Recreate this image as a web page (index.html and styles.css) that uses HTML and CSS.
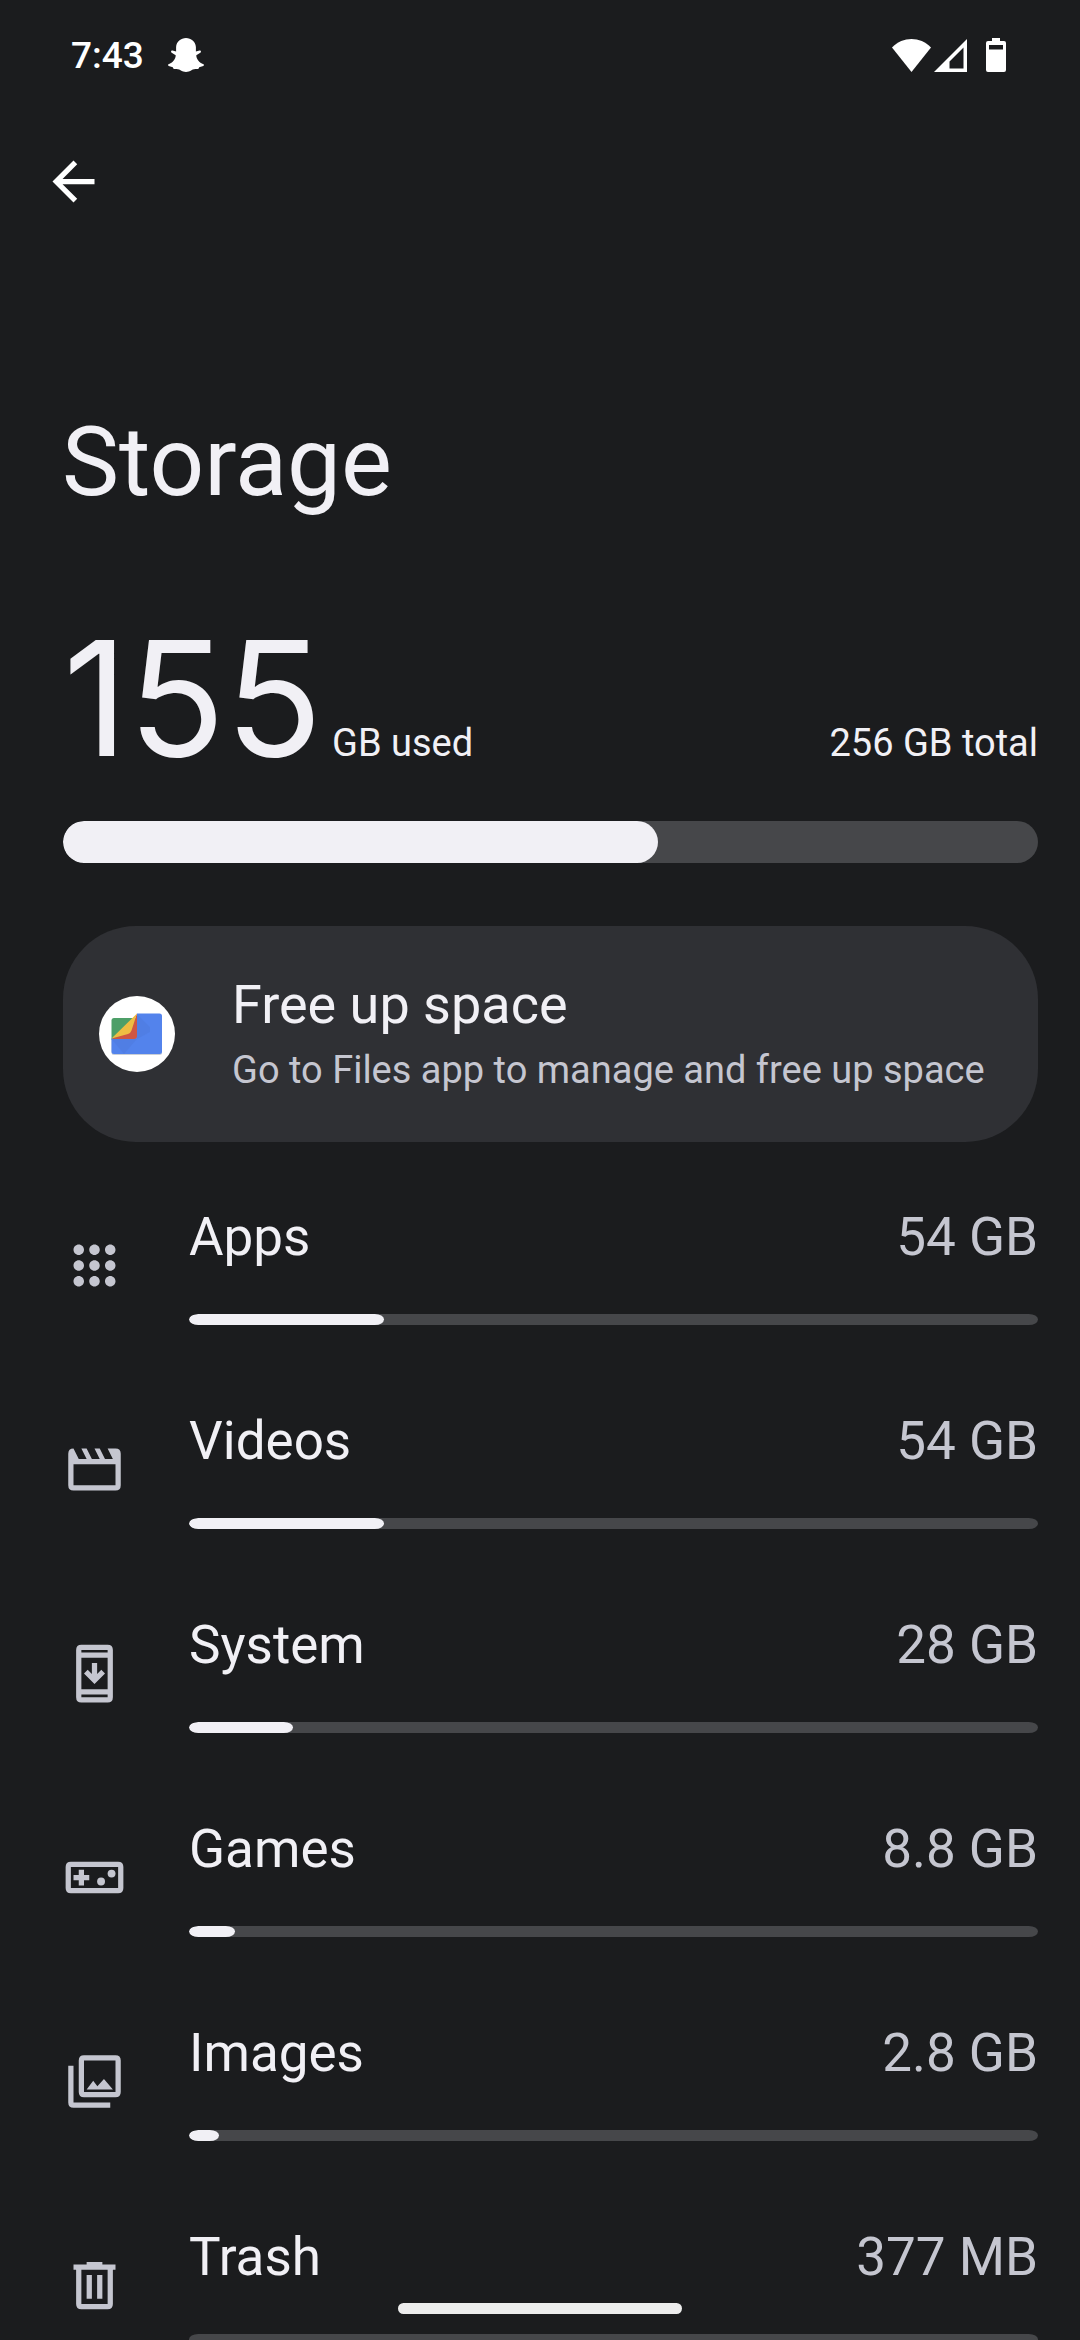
FILE: index.html
```html
<!DOCTYPE html>
<html lang="en">
<head>
  <meta charset="UTF-8" />
  <meta name="viewport" content="width=device-width, initial-scale=1.0"/>
  <title>Storage</title>
  <link rel="stylesheet" href="styles.css">
</head>
<body>

  <div class="status-bar">
    <div class="status-left">
      <span class="clock">7:43</span>
      <svg class="icon-snap" viewBox="0 0 36 34" aria-hidden="true">
        <path d="M18 0C23 0 27.600 3.500 27.900 9V13.600L31.500 12.600C33 12.500 33.500 14 32.300 14.800L28.300 17.200C28.300 21 31.200 24.600 35.500 26.300C36.200 26.800 36 27.600 35.300 28L31.200 29.300L30.300 31C27.500 30.900 25.600 31 23.500 32.200C20 34.500 16 34.500 12.500 32.200C10.400 31 8.500 30.900 5.700 31L4.800 29.300L.7 28C0 27.600-.2 26.800.5 26.300C4.800 24.600 7.700 21 7.700 17.200L3.700 14.800C2.500 14 3 12.500 4.500 12.600L8.100 13.600V9C8.400 3.500 13 0 18 0Z"/>
      </svg>
    </div>
    <div class="status-right">
      <svg class="icon-wifi" viewBox="0 0 39 33" aria-hidden="true">
        <path d="M0 8.500C11-2.800 28-2.800 39 8.500L19.500 33Z"/>
      </svg>
      <svg class="icon-signal" viewBox="0 0 33 33" aria-hidden="true">
        <path fill-rule="evenodd" d="M0 33L33 0V33ZM15.500 22.500V29.500H29.500V8.500Z"/>
      </svg>
      <svg class="icon-battery" viewBox="0 0 20 34" aria-hidden="true">
        <path fill-rule="evenodd" d="M6 0H14V3H18A2 2 0 0 1 20 5V32A2 2 0 0 1 18 34H2A2 2 0 0 1 0 32V5A2 2 0 0 1 2 3H6ZM3 7V11.500H17V7Z"/>
      </svg>
    </div>
  </div>

  <header class="app-bar">
    <button class="back-btn" type="button" aria-label="Back">
      <svg viewBox="0 0 24 24"><path d="M20 11H7.830l5.590-5.590L12 4l-8 8 8 8 1.410-1.410L7.830 13H20v-2z"/></svg>
    </button>
    <h1>Storage</h1>
  </header>

  <main>
    <section class="usage">
      <div class="usage-text">
        <p><span class="used-number">155</span> <span class="used-unit">GB used</span></p>
        <p class="total">256 GB total</p>
      </div>
      <progress class="bar bar-main" max="100" value="61" aria-label="Storage used"></progress>
    </section>

    <a class="card" href="#files">
      <svg class="files-icon" viewBox="0 0 76 76" aria-hidden="true">
        <circle cx="38" cy="38" r="38" fill="#fff"/>
        <path d="M15 22H38V44H12.500V24.500A2.500 2.500 0 0 1 15 22Z" fill="#4d9f68"/>
        <path d="M12.500 43H63V56.500A2.500 2.500 0 0 1 60.500 59H15A2.500 2.500 0 0 1 12.500 56.500Z" fill="#c9ced6"/>
        <path d="M12.500 55.500V42.500L36 42L38 17.500H60.500A2.500 2.500 0 0 1 63 20V55.500A2.500 2.500 0 0 1 60.500 58H15A2.500 2.500 0 0 1 12.500 55.500Z" fill="#5383ec"/>
        <path d="M38 18L51 31V36L38 43ZM12.500 43H38L25 58Z" fill="#4a76d6" opacity=".35"/>
        <path d="M38 17.500V40A3 3 0 0 1 35 43H12.500L31 36Z" fill="#ce5643"/>
        <path d="M38 17.500L32.500 34.500Q31.700 37 29 38L12.500 42.500Z" fill="#eebd42"/>
      </svg>
      <div class="card-text">
        <h2>Free up space</h2>
        <p>Go to Files app to manage and free up space</p>
      </div>
    </a>

    <ul class="categories">
      <li>
        <svg viewBox="0 0 24 24" aria-hidden="true"><path d="M6 8c1.100 0 2-.9 2-2s-.9-2-2-2-2 .9-2 2 .9 2 2 2zm6 0c1.100 0 2-.9 2-2s-.9-2-2-2-2 .9-2 2 .9 2 2 2zm6 0c1.100 0 2-.9 2-2s-.9-2-2-2-2 .9-2 2 .9 2 2 2zM6 14c1.100 0 2-.9 2-2s-.9-2-2-2-2 .9-2 2 .9 2 2 2zm6 0c1.100 0 2-.9 2-2s-.9-2-2-2-2 .9-2 2 .9 2 2 2zm6 0c1.100 0 2-.9 2-2s-.9-2-2-2-2 .9-2 2 .9 2 2 2zM6 20c1.100 0 2-.9 2-2s-.9-2-2-2-2 .9-2 2 .9 2 2 2zm6 0c1.100 0 2-.9 2-2s-.9-2-2-2-2 .9-2 2 .9 2 2 2zm6 0c1.100 0 2-.9 2-2s-.9-2-2-2-2 .9-2 2 .9 2 2 2z"/></svg>
        <div class="category">
          <p class="category-text"><span id="apps">Apps</span> <span class="size">54 GB</span></p>
          <progress class="bar" max="100" value="23" aria-labelledby="apps"></progress>
        </div>
      </li>
      <li>
        <svg viewBox="0 0 24 24" aria-hidden="true"><path fill-rule="evenodd" d="M4 4L6 8H9L7 4H9L11 8H14L12 4H14L16 8H19L17 4H20Q22 4 22 6V18Q22 20 20 20H4Q2 20 2 18V6Q2 4 4 4ZM4 10V18H20V10Z"/></svg>
        <div class="category">
          <p class="category-text"><span id="videos">Videos</span> <span class="size">54 GB</span></p>
          <progress class="bar" max="100" value="23" aria-labelledby="videos"></progress>
        </div>
      </li>
      <li>
        <svg viewBox="0 0 24 24" aria-hidden="true"><path fill-rule="evenodd" d="M7 1H17Q19 1 19 3V21Q19 23 17 23H7Q5 23 5 21V3Q5 1 7 1ZM7 3V4H17V3ZM7 6V18H17V6ZM7 20V21H17V20ZM16 12l-4 4-4-4 1.410-1.410L11 12.170V8h2v4.170l1.590-1.590L16 12z"/></svg>
        <div class="category">
          <p class="category-text"><span id="system">System</span> <span class="size">28 GB</span></p>
          <progress class="bar" max="100" value="12.3" aria-labelledby="system"></progress>
        </div>
      </li>
      <li>
        <svg viewBox="0 0 24 24" aria-hidden="true"><path fill-rule="evenodd" d="M3 6H21Q23 6 23 8V16Q23 18 21 18H3Q1 18 1 16V8Q1 6 3 6ZM3 8V16H21V8ZM6 15v-2H4v-2h2V9h2v2h2v2H8v2z"/><circle cx="14.500" cy="13.500" r="1.500"/><circle cx="18.500" cy="10.500" r="1.500"/></svg>
        <div class="category">
          <p class="category-text"><span id="games">Games</span> <span class="size">8.8 GB</span></p>
          <progress class="bar" max="100" value="5.4" aria-labelledby="games"></progress>
        </div>
      </li>
      <li>
        <svg viewBox="0 0 24 24" aria-hidden="true"><path fill-rule="evenodd" d="M8 2H20Q22 2 22 4V16Q22 18 20 18H8Q6 18 6 16V4Q6 2 8 2ZM8 4V16H20V4ZM9 15L11.500 11.700L13.100 13.800L15.600 11L19 15ZM2 6H4V20H18V22H4Q2 22 2 20Z"/></svg>
        <div class="category">
          <p class="category-text"><span id="images">Images</span> <span class="size">2.8 GB</span></p>
          <progress class="bar" max="100" value="3.5" aria-labelledby="images"></progress>
        </div>
      </li>
      <li>
        <svg viewBox="0 0 24 24" aria-hidden="true"><path fill-rule="evenodd" d="M9 3H15V4H20V6H19V19Q19 21 17 21H7Q5 21 5 19V6H4V4H9ZM7 6V19H17V6ZM9 8H11V17H9ZM13 8H15V17H13Z"/></svg>
        <div class="category">
          <p class="category-text"><span id="trash">Trash</span> <span class="size">377 MB</span></p>
          <progress class="bar" max="100" value="0" aria-labelledby="trash"></progress>
        </div>
      </li>
    </ul>
  </main>

  <div class="nav-handle"></div>

</body>
</html>
```
FILE: styles.css
```css
* {
  box-sizing: border-box;
  margin: 0;
  padding: 0;
}

body {
  font-family: Roboto, sans-serif;
  height: 100vh;
  overflow: hidden;
  background-color: #1b1c1e;
  color: #f1f0f5;
}

/* STATUS BAR */
.status-bar {
  height: 110px;
  padding: 0 74px 0 71px;
  display: flex;
  align-items: center;
  justify-content: space-between;
  color: white;
}

.status-left,
.status-right {
  display: flex;
  align-items: center;
}

.status-left {
  gap: 24px;
}

.clock {
  font-size: 37px;
  font-weight: 500;
}

.status-bar svg {
  display: block;
  fill: white;
}

.icon-snap {
  width: 36px;
  height: 34px;
}

.icon-wifi {
  width: 39px;
  height: 33px;
}

.icon-signal {
  width: 33px;
  height: 33px;
  margin-left: 3px;
}

.icon-battery {
  width: 20px;
  height: 34px;
  margin-left: 19px;
}

/* HEADER */
.app-bar {
  padding: 40px 42px 0;
}

.back-btn {
  display: block;
  width: 63px;
  height: 63px;
  border: none;
  background: none;
  cursor: pointer;
}

.back-btn svg {
  display: block;
  fill: white;
}

h1 {
  margin-top: 193px;
  padding-left: 20px;
  font-size: 96px;
  font-weight: 400;
  line-height: 112px;
}

/* CONTENT */
main {
  padding: 82px 42px 0 63px;
}

.usage-text {
  display: flex;
  align-items: baseline;
  justify-content: space-between;
  margin-bottom: 25px;
  font-size: 38px;
  line-height: 50px;
}

.used-number {
  font-family: Inter, sans-serif;
  font-size: 160px;
  line-height: 196px;
}

.bar {
  display: block;
  width: 100%;
  height: 11px;
  border: none;
  border-radius: 10px / 6px;
  background-color: #46474a;
  overflow: hidden;
  appearance: none;
  -webkit-appearance: none;
}

.bar::-webkit-progress-bar {
  background-color: #46474a;
}

.bar::-webkit-progress-value {
  border-radius: 10px / 6px;
  background-color: #f1f0f5;
}

.bar-main {
  height: 42px;
  border-radius: 21px;
}

.bar-main::-webkit-progress-value {
  border-radius: 21px;
}

/* FILES CARD */
.card {
  display: flex;
  align-items: center;
  gap: 57px;
  height: 216px;
  margin: 63px 0 21px;
  padding: 0 36px;
  border-radius: 73px;
  background-color: #2f3034;
  color: #f1f0f5;
  text-decoration: none;
}

.files-icon {
  flex: none;
  width: 76px;
  height: 76px;
}

.card h2 {
  font-size: 54px;
  font-weight: 400;
  line-height: 72px;
}

.card p {
  font-size: 38px;
  line-height: 58px;
  color: #c5c6d0;
}

/* CATEGORIES */
.categories {
  list-style: none;
}

.categories li {
  display: flex;
  align-items: center;
  gap: 63px;
  height: 204px;
}

.categories svg {
  flex: none;
  width: 63px;
  height: 63px;
  fill: #c5c6d0;
}

.category {
  flex: 1;
}

.category-text {
  display: flex;
  justify-content: space-between;
  margin-bottom: 46px;
  font-size: 53px;
  line-height: 62px;
}

.size {
  color: #c5c6d0;
}

/* GESTURE HANDLE */
.nav-handle {
  position: fixed;
  bottom: 26px;
  left: 50%;
  width: 284px;
  height: 11px;
  margin-left: -142px;
  border-radius: 6px;
  background-color: #ededed;
}
```
